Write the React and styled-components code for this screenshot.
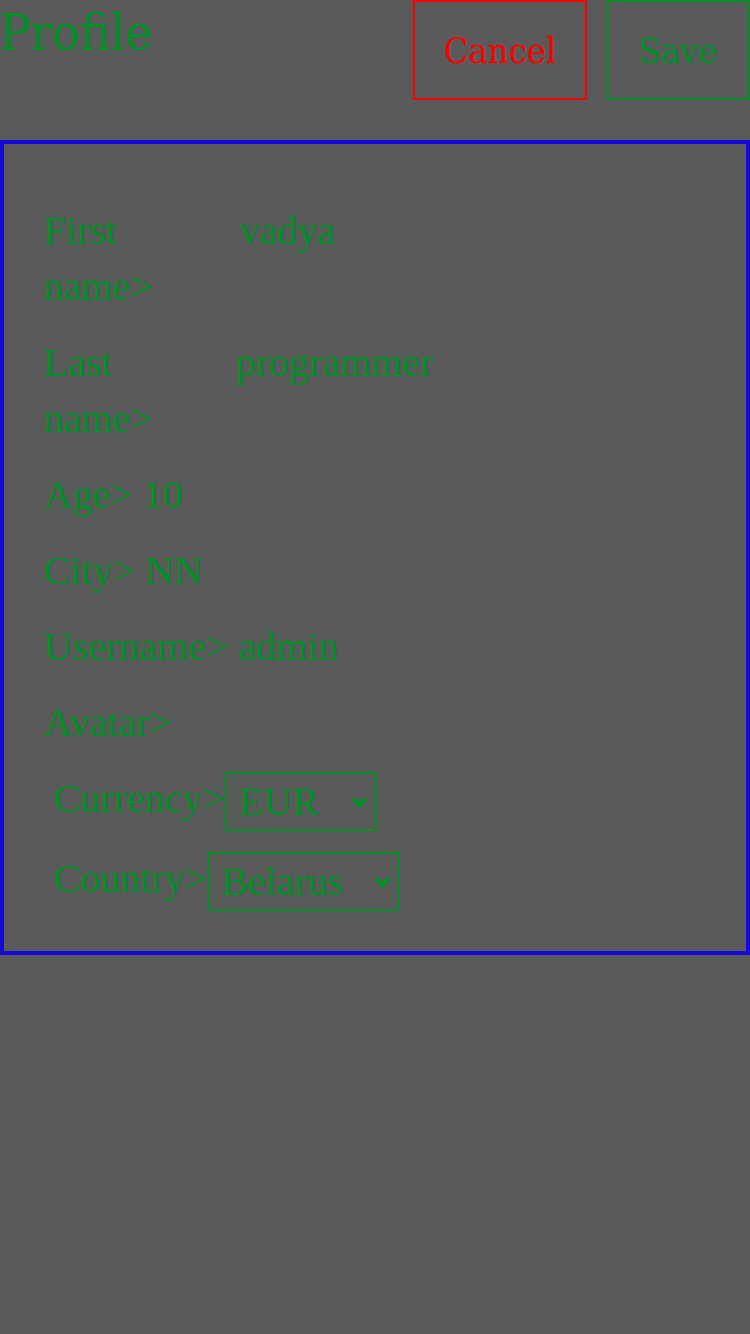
import React, { useState } from 'react';
import styled, { createGlobalStyle } from 'styled-components';

const GlobalStyle = createGlobalStyle`
  html, body {
    margin: 0;
    padding: 0;
    background-color: #5a5a5a;
  }
  body {
    font-family: "Liberation Serif", "Times New Roman", serif;
    color: #008f26;
  }
`;

const Chevron = () => (
  <ChevronIcon width="18" height="12" viewBox="0 0 18 12">
    <polyline
      points="2.5,2.5 9,9 15.5,2.5"
      fill="none"
      stroke="currentColor"
      strokeWidth="4.5"
    />
  </ChevronIcon>
);

const App = () => {
  const [currency, setCurrency] = useState('EUR');
  const [country, setCountry] = useState('Belarus');

  return (
    <Page>
      <GlobalStyle />
      <Header>
        <Title>Profile</Title>
        <Actions>
          <ActionButton $variant="red">Cancel</ActionButton>
          <ActionButton>Save</ActionButton>
        </Actions>
      </Header>
      <Card>
        <Row>
          <Label $width="110px">First name&gt;</Label>
          <Value $indent="76px">vadya</Value>
        </Row>
        <Row>
          <Label $width="110px">Last name&gt;</Label>
          <Value $indent="72px">programmer</Value>
        </Row>
        <Row>
          <Label>Age&gt;</Label>
          <Value>10</Value>
        </Row>
        <Row>
          <Label>City&gt;</Label>
          <Value>NN</Value>
        </Row>
        <Row>
          <Label>Username&gt;</Label>
          <Value>admin</Value>
        </Row>
        <Row>
          <Label>Avatar&gt;</Label>
        </Row>
        <SelectRow>
          <Label>Currency&gt;</Label>
          <SelectWrap>
            <Select
              $width="152px"
              value={currency}
              onChange={(e) => setCurrency(e.target.value)}
            >
              <option value="RUB">RUB</option>
              <option value="EUR">EUR</option>
              <option value="USD">USD</option>
            </Select>
            <Chevron />
          </SelectWrap>
        </SelectRow>
        <SelectRow>
          <Label>Country&gt;</Label>
          <SelectWrap>
            <Select
              $width="192px"
              value={country}
              onChange={(e) => setCountry(e.target.value)}
            >
              <option value="Russia">Russia</option>
              <option value="Belarus">Belarus</option>
              <option value="Ukraine">Ukraine</option>
              <option value="Kazakhstan">Kazakhstan</option>
            </Select>
            <Chevron />
          </SelectWrap>
        </SelectRow>
      </Card>
    </Page>
  );
};

const Page = styled.div`
  width: 750px;
  min-height: 1334px;
  background-color: #5a5a5a;
`;

const Header = styled.div`
  display: flex;
  justify-content: space-between;
  align-items: flex-start;
  margin-bottom: 40px;
`;

const Title = styled.h1`
  margin: 0;
  padding-top: 3px;
  font-family: "DejaVu Serif Condensed", "DejaVu Serif", serif;
  font-stretch: condensed;
  font-weight: normal;
  font-size: 51px;
  line-height: 60px;
  color: #008f26;
`;

const Actions = styled.div`
  display: flex;
  gap: 20px;
`;

const ActionButton = styled.button`
  height: 100px;
  padding: 0 ${(p) => (p.$variant === 'red' ? '28.5px' : '30px')};
  background: transparent;
  border: 2px solid ${(p) => (p.$variant === 'red' ? '#ff0000' : '#008f26')};
  color: ${(p) => (p.$variant === 'red' ? '#ff0000' : '#008f26')};
  font-family: "DejaVu Serif Condensed", "DejaVu Serif", serif;
  font-stretch: condensed;
  font-size: 36px;
  cursor: pointer;
`;

const Card = styled.div`
  border: 4px solid #1409dc;
  padding: 59px 40px 40px 40px;
  display: flex;
  flex-direction: column;
  gap: 20px;
  font-size: 40px;
  line-height: 56px;
`;

const Row = styled.div`
  display: flex;
  align-items: flex-start;
  gap: 10px;
`;

const Label = styled.span`
  width: ${(p) => p.$width || 'auto'};
  flex-shrink: 0;
`;

const Value = styled.span`
  margin-left: ${(p) => p.$indent || '0'};
`;

const SelectRow = styled.div`
  display: flex;
  align-items: flex-start;
  margin-left: 10px;
  height: 60px;
`;

const SelectWrap = styled.div`
  position: relative;
  display: flex;
  margin-top: 1px;
  color: #008f26;
`;

const Select = styled.select`
  appearance: none;
  -webkit-appearance: none;
  width: ${(p) => p.$width};
  height: 59px;
  padding: 0 0 0 12px;
  border: 2px solid #008f26;
  border-radius: 0;
  background: transparent;
  color: #008f26;
  font-family: "Liberation Serif", "Times New Roman", serif;
  font-size: 40px;
  outline: none;
`;

const ChevronIcon = styled.svg`
  position: absolute;
  right: 8px;
  top: 24px;
  pointer-events: none;
`;

export default App;
